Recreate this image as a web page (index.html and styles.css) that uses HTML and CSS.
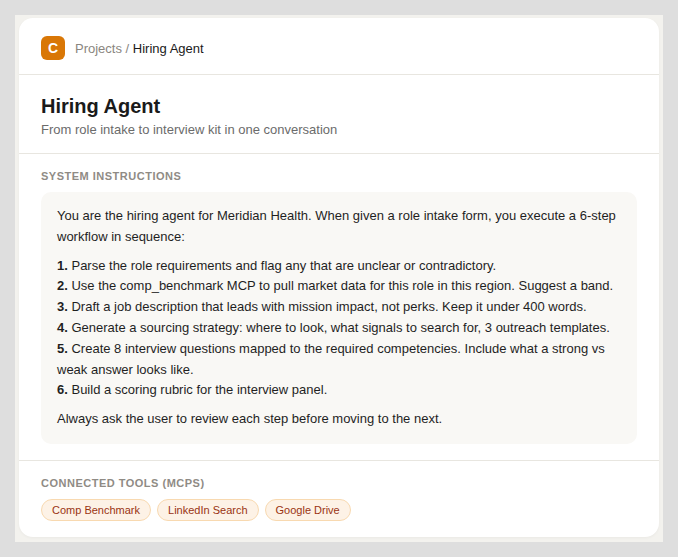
FILE: index.html
```html
<!DOCTYPE html>
<html lang="en">
<head>
    <meta charset="UTF-8">
    <title>Hiring Agent</title>
    <link rel="stylesheet" href="styles.css">
</head>
<body>
<div class="frame">
    <div class="card">
        <div class="topbar">
            <div class="logo">C</div>
            <div class="crumbs">Projects / <span class="crumb-current">Hiring Agent</span></div>
        </div>
        <div class="heading">
            <h1>Hiring Agent</h1>
            <p>From role intake to interview kit in one conversation</p>
        </div>
        <div class="section">
            <div class="label">System Instructions</div>
            <div class="instructions">
                <p>You are the hiring agent for Meridian Health. When given a role intake form, you execute a 6-step workflow in sequence:</p>
                <p>
                    <b>1.</b> Parse the role requirements and flag any that are unclear or contradictory.<br>
                    <b>2.</b> Use the comp_benchmark MCP to pull market data for this role in this region. Suggest a band.<br>
                    <b>3.</b> Draft a job description that leads with mission impact, not perks. Keep it under 400 words.<br>
                    <b>4.</b> Generate a sourcing strategy: where to look, what signals to search for, 3 outreach templates.<br>
                    <b>5.</b> Create 8 interview questions mapped to the required competencies. Include what a strong vs weak answer looks like.<br>
                    <b>6.</b> Build a scoring rubric for the interview panel.
                </p>
                <p>Always ask the user to review each step before moving to the next.</p>
            </div>
        </div>
        <div class="section tools">
            <div class="label">Connected Tools (MCPs)</div>
            <div class="chips">
                <span class="chip">Comp Benchmark</span>
                <span class="chip">LinkedIn Search</span>
                <span class="chip">Google Drive</span>
            </div>
        </div>
    </div>
</div>
</body>
</html>
```

FILE: styles.css
```css
body {
    margin: 0;
    padding: 15px;
    background-color: #dedede;
    font-family: "Liberation Sans", Arial, sans-serif;
}

.frame {
    width: 640px;
    padding: 3px 4px 5px;
    background-color: #f3f2ee;
}

.card {
    background-color: #fff;
    border-radius: 14px;
    box-shadow: 0 1px 3px rgba(0, 0, 0, 0.04);
}

/* Top bar */
.topbar {
    display: flex;
    align-items: center;
    gap: 10px;
    padding: 18px 22px 14px;
    border-bottom: 1px solid #e8e6e0;
}

.logo {
    width: 24px;
    height: 24px;
    border-radius: 6px;
    background-color: #d97706;
    color: #fff;
    font-size: 14px;
    font-weight: bold;
    line-height: 24px;
    text-align: center;
}

.crumbs {
    font-size: 13px;
    color: #8a8680;
}

.crumb-current {
    color: #1a1a1a;
}

/* Title block */
.heading {
    padding: 20px 22px 16px;
    border-bottom: 1px solid #e8e6e0;
}

.heading h1 {
    margin: 0 0 4px;
    font-size: 20px;
    line-height: 23px;
    font-weight: bold;
    color: #1a1a1a;
}

.heading p {
    margin: 0;
    font-size: 13px;
    line-height: 15px;
    color: #6b6b6b;
}

/* Sections */
.section {
    padding: 16px 22px;
    border-bottom: 1px solid #e8e6e0;
}

.section.tools {
    border-bottom: none;
}

.label {
    margin-bottom: 9px;
    font-size: 11px;
    line-height: 13px;
    font-weight: bold;
    letter-spacing: 0.5px;
    text-transform: uppercase;
    color: #8f8b85;
}

.instructions {
    padding: 14px 16px;
    border-radius: 10px;
    background-color: #f9f8f5;
    font-size: 13px;
    line-height: 20.8px;
    color: #1f1f1f;
}

.instructions p {
    margin: 0 0 8px;
}

.instructions p:last-child {
    margin-bottom: 0;
}

/* Tool chips */
.chips {
    display: flex;
    gap: 6px;
}

.chip {
    padding: 4px 10px;
    border: 1px solid #f8d9b0;
    border-radius: 11px;
    background-color: #fdf2e6;
    font-size: 11px;
    line-height: 12px;
    color: #9a3412;
}
```
